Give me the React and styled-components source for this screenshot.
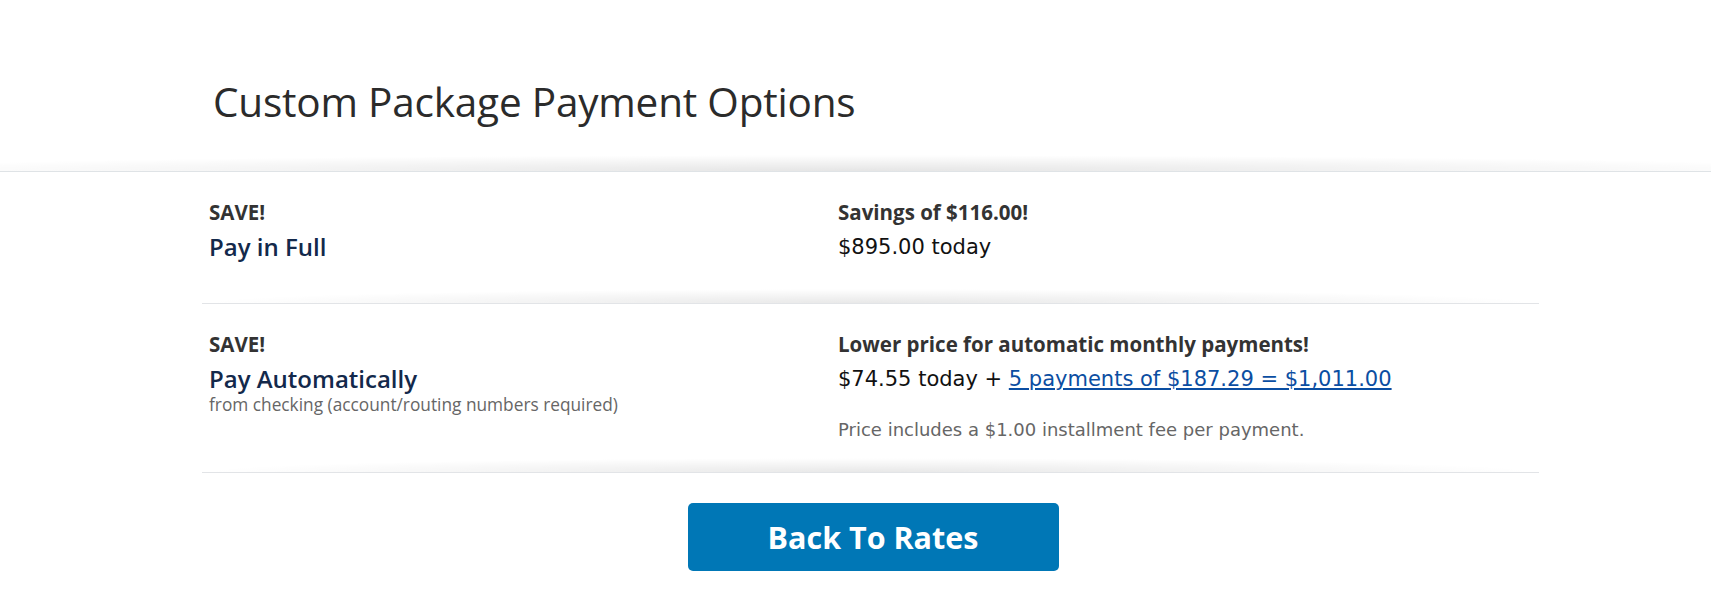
import styled, { createGlobalStyle } from 'styled-components';

const GlobalStyle = createGlobalStyle`
  body {
    margin: 0;
    background: #fff;
    font-family: "Open Sans", "Noto Sans", sans-serif;
    color: #333;
  }
`;

const options = [
  {
    id: 'full',
    tag: 'SAVE!',
    title: 'Pay in Full',
    sub: null,
    headline: 'Savings of $116.00!',
    price: '$895.00 today',
    link: null,
    note: null,
  },
  {
    id: 'auto',
    tag: 'SAVE!',
    title: 'Pay Automatically',
    sub: 'from checking (account/routing numbers required)',
    headline: 'Lower price for automatic monthly payments!',
    price: '$74.55 today + ',
    link: '5 payments of $187.29 = $1,011.00',
    note: 'Price includes a $1.00 installment fee per payment.',
  },
];

const App = () => {
  return (
    <>
      <GlobalStyle />
      <Header>
        <Title>Custom Package Payment Options</Title>
      </Header>
      <Content>
        {options.map((opt) => (
          <OptionRow key={opt.id} $tall={!!opt.note}>
            <div>
              <Tag>{opt.tag}</Tag>
              <OptionName>{opt.title}</OptionName>
              {opt.sub && <Sub>{opt.sub}</Sub>}
            </div>
            <div>
              <Tag>{opt.headline}</Tag>
              <Price>
                {opt.price}
                {opt.link && <a href='#'>{opt.link}</a>}
              </Price>
              {opt.note && <Note>{opt.note}</Note>}
            </div>
          </OptionRow>
        ))}
        <Actions>
          <BackButton type='button'>Back To Rates</BackButton>
        </Actions>
      </Content>
    </>
  );
};

export default App;

const Header = styled.header`
  position: relative;
  height: 172px;
  padding: 74px 0 0 213px;
  box-sizing: border-box;
  border-bottom: 1px solid #dfe3e6;

  &::after {
    content: '';
    position: absolute;
    left: 0;
    right: 0;
    bottom: 0;
    height: 16px;
    background: radial-gradient(ellipse 60% 100% at 50% 100%, rgba(0, 0, 0, 0.1), rgba(0, 0, 0, 0) 100%);
    pointer-events: none;
  }
`;

const Title = styled.h1`
  margin: 0;
  font-size: 40.5px;
  line-height: 55px;
  font-weight: 400;
  color: #2b2b2b;
  letter-spacing: -0.2px;
`;

const Content = styled.main`
  margin: 0 172px 0 202px;
`;

const OptionRow = styled.section`
  position: relative;
  display: grid;
  grid-template-columns: 629px 1fr;
  padding: 27px 0 ${({ $tall }) => ($tall ? '30px' : '41px')} 7px;
  border-bottom: 1px solid #e2e4e7;

  &::after {
    content: '';
    position: absolute;
    left: 0;
    right: 0;
    bottom: 0;
    height: 14px;
    background: radial-gradient(ellipse 50% 100% at 50% 100%, rgba(0, 0, 0, 0.09), rgba(0, 0, 0, 0) 100%);
    pointer-events: none;
  }
`;

const Tag = styled.div`
  font-size: 20.5px;
  font-weight: 700;
  color: #333;
  line-height: 26px;
`;

const OptionName = styled.div`
  margin-top: 7px;
  font-size: 24px;
  font-weight: 600;
  color: #13294b;
  line-height: 30px;
`;

const Sub = styled.div`
  font-size: 17.3px;
  color: #666;
  line-height: 22px;
`;

const Price = styled.div`
  margin-top: 7px;
  font-family: "DejaVu Sans", Verdana, sans-serif;
  font-size: 21px;
  color: #111;
  line-height: 30px;

  a {
    color: #0b4ea2;
    text-decoration: underline;
  }
`;

const Note = styled.div`
  margin-top: 24px;
  font-family: "DejaVu Sans", Verdana, sans-serif;
  font-size: 18px;
  color: #666;
  line-height: 24px;
`;

const Actions = styled.div`
  display: flex;
  justify-content: center;
  padding: 30px 0 0 5px;
`;

const BackButton = styled.button`
  width: 371px;
  height: 68px;
  border: none;
  border-radius: 5px;
  background: #0077b6;
  color: #fff;
  font-family: "Open Sans", "Noto Sans", sans-serif;
  font-size: 30.5px;
  font-weight: 700;
  cursor: pointer;
`;
